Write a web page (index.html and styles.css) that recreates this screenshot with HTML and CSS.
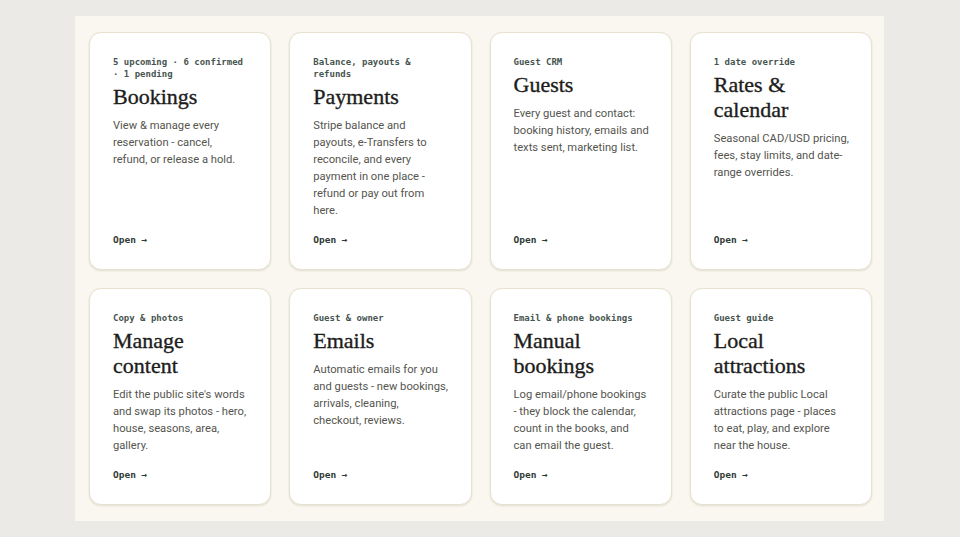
FILE: index.html
```html
<!DOCTYPE html>
<html lang="en">
<head>
<meta charset="utf-8">
<title>Admin</title>
<link rel="stylesheet" href="styles.css">
</head>
<body>
<main class="panel">
  <div class="grid">
    <a class="card" href="#">
      <div class="eyebrow">5 upcoming · 6 confirmed · 1 pending</div>
      <h2 class="title">Bookings</h2>
      <p class="desc">View &amp; manage every reservation - cancel, refund, or release a hold.</p>
      <div class="open">Open →</div>
    </a>
    <a class="card" href="#">
      <div class="eyebrow">Balance, payouts &amp; refunds</div>
      <h2 class="title">Payments</h2>
      <p class="desc">Stripe balance and payouts, e-Transfers to reconcile, and every payment in one place - refund or pay out from here.</p>
      <div class="open">Open →</div>
    </a>
    <a class="card" href="#">
      <div class="eyebrow">Guest CRM</div>
      <h2 class="title">Guests</h2>
      <p class="desc">Every guest and contact: booking history, emails and texts sent, marketing list.</p>
      <div class="open">Open →</div>
    </a>
    <a class="card" href="#">
      <div class="eyebrow">1 date override</div>
      <h2 class="title">Rates &amp; calendar</h2>
      <p class="desc">Seasonal CAD/USD pricing, fees, stay limits, and date-range overrides.</p>
      <div class="open">Open →</div>
    </a>
    <a class="card" href="#">
      <div class="eyebrow">Copy &amp; photos</div>
      <h2 class="title">Manage content</h2>
      <p class="desc">Edit the public site's words and swap its photos - hero, house, seasons, area, gallery.</p>
      <div class="open">Open →</div>
    </a>
    <a class="card" href="#">
      <div class="eyebrow">Guest &amp; owner</div>
      <h2 class="title">Emails</h2>
      <p class="desc">Automatic emails for you and guests - new bookings, arrivals, cleaning, checkout, reviews.</p>
      <div class="open">Open →</div>
    </a>
    <a class="card" href="#">
      <div class="eyebrow">Email &amp; phone bookings</div>
      <h2 class="title">Manual bookings</h2>
      <p class="desc">Log email/phone bookings - they block the calendar, count in the books, and can email the guest.</p>
      <div class="open">Open →</div>
    </a>
    <a class="card" href="#">
      <div class="eyebrow">Guest guide</div>
      <h2 class="title">Local attractions</h2>
      <p class="desc">Curate the public Local attractions page - places to&nbsp;eat, play, and explore near the house.</p>
      <div class="open">Open →</div>
    </a>
  </div>
</main>
</body>
</html>
```
FILE: styles.css
```css
html, body {
  margin: 0;
  padding: 0;
}
body {
  background: #ebeae6;
  padding: 16px 76px 16px 75px;
  font-family: "Roboto", "Liberation Sans", sans-serif;
}
.panel {
  background: #f9f7ef;
  padding: 16px 12px 16px 14px;
  width: 783px;
}
.grid {
  display: grid;
  grid-template-columns: repeat(4, 1fr);
  column-gap: 18px;
  row-gap: 18px;
}
.card {
  display: flex;
  flex-direction: column;
  background: #ffffff;
  border: 1px solid #e7e1cf;
  border-radius: 12px;
  box-shadow: 0 1px 2px rgba(120, 110, 80, 0.18);
  padding: 23px 21.25px 23px 23px;
  text-decoration: none;
  color: inherit;
}
.eyebrow {
  font-family: "DejaVu Sans Mono", "Liberation Mono", monospace;
  font-weight: bold;
  font-size: 9px;
  line-height: 12px;
  color: #47554f;
}
.title {
  font-family: "Liberation Serif", serif;
  font-weight: normal;
  font-size: 22px;
  line-height: 25px;
  color: #1d1d1b;
  margin: 4px 0 0 0;
  -webkit-text-stroke: 0.35px #1d1d1b;
}
.desc {
  font-size: 11.2px;
  line-height: 17px;
  color: #55554f;
  margin: 8px 0 0 0;
}
.open {
  margin-top: auto;
  padding-top: 15px;
  font-family: "DejaVu Sans Mono", "Liberation Mono", monospace;
  font-weight: bold;
  font-size: 9.5px;
  line-height: 12px;
  color: #2f3a35;
}
```
